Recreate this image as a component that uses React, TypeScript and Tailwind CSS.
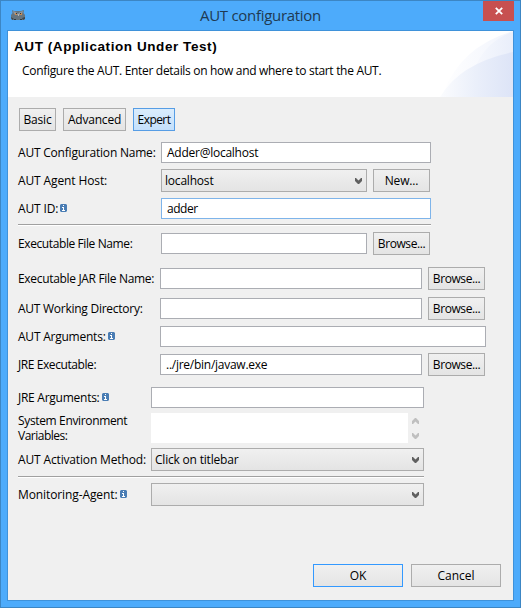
import type { ReactNode } from "react";
import { clsx } from "clsx";

function InfoIcon() {
  return (
    <svg className="mb-px ml-[2px] shrink-0" width="8" height="8" viewBox="0 0 8 8" shapeRendering="crispEdges">
      <rect width="7" height="8" fill="#4a7db4" />
      <path d="M0 0h1v1H0zM6 0h1v1H6zM0 7h1v1H0zM6 7h1v1H6z" fill="#9db7d3" />
      <path d="M3 1h1v1H3zM2 3h2v3h1v1H2V6h1V4H2z" fill="#fff" />
    </svg>
  );
}

function Chevron({ up = false, faint = false }: { up?: boolean; faint?: boolean }) {
  return (
    <svg className={clsx("shrink-0", up && "rotate-180")} width="7" height="6" viewBox="0 0 7 6">
      <path d="M0 0H1L3.5 2.4L6 0H7V3L4 6H3L0 3Z" fill={faint ? "#bfbfbf" : "#606060"} />
    </svg>
  );
}

function Label({ children, className, info = false }: { children: ReactNode; className?: string; info?: boolean }) {
  return (
    <div className={clsx("flex shrink-0 items-center whitespace-nowrap", className)}>
      <span>{children}</span>
      {info && <InfoIcon />}
    </div>
  );
}

function Field({ children, className }: { children?: ReactNode; className?: string }) {
  return (
    <div className={clsx("flex h-[21px] shrink-0 items-center border bg-white pl-[5px] whitespace-nowrap", className)}>
      {children}
    </div>
  );
}

function Select({ children, className }: { children?: ReactNode; className?: string }) {
  return (
    <div
      className={clsx(
        "flex h-[23px] shrink-0 items-center justify-between border border-[#acacac] bg-linear-to-b from-[#f0f0f0] to-[#e4e4e4] pr-1 pl-[3px] whitespace-nowrap",
        className,
      )}
    >
      <span>{children}</span>
      <Chevron />
    </div>
  );
}

function Button({ children, className }: { children: ReactNode; className?: string }) {
  return (
    <button
      className={clsx(
        "flex h-[23px] shrink-0 items-center justify-center border bg-linear-to-b whitespace-nowrap",
        className,
      )}
    >
      {children}
    </button>
  );
}

const plain = "border-[#acacac] from-[#f0f0f0] to-[#e4e4e4]";

function Browse() {
  return <Button className={clsx("ml-1.5 w-[57px] tracking-[-0.42px]", plain)}>Browse...</Button>;
}

function Row({ children, className }: { children: ReactNode; className?: string }) {
  return <div className={clsx("flex shrink-0 items-center", className)}>{children}</div>;
}

function Divider({ className }: { className?: string }) {
  return <div className={clsx("h-0.5 shrink-0 border-t border-b border-t-[#a0a0a0] border-b-white", className)} />;
}

function OwlIcon() {
  return (
    <svg width="14" height="11" viewBox="0 0 14 11">
      <path d="M1 0L3 1H10L13 0L12.5 3L14 5V9L12 10H3L0 9V5L1.5 3Z" fill="#66757f" />
      <path d="M2 1L5 2L7 4L9 2L12 1L11 4L8 5H5L3 4Z" fill="#8d98a0" />
      <path d="M0 7L3 9L1 10ZM11 8L14 7V9L12 10Z" fill="#3e474d" />
      <rect x="4" y="3" width="2" height="2" fill="#c68b55" />
      <rect x="9" y="3" width="2" height="2" fill="#c68b55" />
      <rect x="5" y="3" width="1" height="1" fill="#38322e" />
      <rect x="9" y="3" width="1" height="1" fill="#38322e" />
      <rect x="7" y="4" width="1" height="2" fill="#b9b3ac" />
      <path d="M3 9H5V10H3ZM9 9H11V10H9Z" fill="#303b43" />
    </svg>
  );
}

function BannerArt() {
  return (
    <svg className="shrink-0" width="73" height="66" viewBox="0 0 73 66">
      <defs>
        <linearGradient id="outer" x1="0" x2="1">
          <stop offset="0" stopColor="#ffffff" />
          <stop offset="1" stopColor="#f1f4fc" />
        </linearGradient>
        <linearGradient id="middle" x1="0" x2="1">
          <stop offset="0" stopColor="#f6f8fd" />
          <stop offset="1" stopColor="#e9eefa" />
        </linearGradient>
        <linearGradient id="inner" x1="0" x2="1">
          <stop offset="0" stopColor="#fbfcfe" />
          <stop offset="0.5" stopColor="#eaeffa" />
          <stop offset="1" stopColor="#dde4f7" />
        </linearGradient>
      </defs>
      <path d="M4 60Q22 15 73 0V66H0Z" fill="url(#outer)" />
      <path d="M36 34Q48 9 73 1V34Z" fill="url(#middle)" />
      <path d="M0 66Q20 32 73 21V66Z" fill="url(#inner)" />
    </svg>
  );
}

export default function App() {
  return (
    <div className="flex h-[608px] w-[521px] flex-col overflow-hidden border border-[#3c86c4] bg-[#4dabfb] px-1.5 pb-1.5 font-['Open_Sans','Noto_Sans',sans-serif] text-[12px] leading-[21px] text-black">
      <div className="flex h-[29px] shrink-0 items-start">
        <div className="mt-[9px] ml-1 w-[60px]">
          <OwlIcon />
        </div>
        <div className="mt-[4px] flex-1 pr-[3px] text-center text-[15px] tracking-[-0.3px] text-[#1f3a52]">
          AUT configuration
        </div>
        <div className="flex w-[61px] justify-end">
          <button className="flex h-5 w-[31px] items-center justify-center bg-[#c75050]">
            <svg width="8" height="8" viewBox="0 0 8 8">
              <path d="M0.8 0.8L7.2 7.2M7.2 0.8L0.8 7.2" stroke="#fff" strokeWidth="1.8" />
            </svg>
          </button>
        </div>
      </div>

      <div className="flex flex-1 flex-col border border-[#3f92da] bg-[#f0f0f0]">
        <div className="flex h-[66px] shrink-0 justify-between bg-white">
          <div className="pt-[6px] pl-1.5 whitespace-nowrap">
            <h1 className="font-['Liberation_Sans',sans-serif] text-[13.5px] leading-5 font-bold tracking-[0.57px]">
              AUT (Application Under Test)
            </h1>
            <p className="mt-[3px] pl-2 tracking-[-0.31px]">
              Configure the AUT. Enter details on how and where to start the AUT.
            </p>
          </div>
          <BannerArt />
        </div>

        <div className="flex flex-col pt-[11px] pl-2.5">
          <div className="ml-px flex gap-[7px]">
            <Button className={clsx("w-[37px] tracking-[-0.2px]", plain)}>Basic</Button>
            <Button className={clsx("w-[63px] tracking-[-0.2px]", plain)}>Advanced</Button>
            <Button className="w-[42px] border-[#569de5] from-[#daecfc] to-[#c4e0fc] tracking-[-0.55px]">Expert</Button>
          </div>

          <Row className="mt-[11px]">
            <Label className="w-[143px] tracking-[-0.21px]">AUT Configuration Name:</Label>
            <Field className="w-[270px] border-[#abadb3] tracking-[-0.25px]">Adder@localhost</Field>
          </Row>
          <Row className="mt-1.5">
            <Label className="w-[143px] tracking-[-0.12px]">AUT Agent Host:</Label>
            <Select className="w-[206px] tracking-[-0.2px]">localhost</Select>
            <Button className={clsx("ml-1.5 w-[57px] tracking-[-0.15px]", plain)}>New...</Button>
          </Row>
          <Row className="mt-1.5">
            <Label className="w-[143px] tracking-[-0.15px]" info>AUT ID:</Label>
            <Field className="w-[270px] border-[#7eb4ea] tracking-[-0.45px]">adder</Field>
          </Row>
          <Divider className="mt-[5px] w-[413px]" />
          <Row className="mt-1.5">
            <Label className="w-[143px] tracking-[-0.4px]">Executable File Name:</Label>
            <Field className="w-[206px] border-[#abadb3]" />
            <Browse />
          </Row>

          <Row className="mt-3">
            <Label className="w-[142px] tracking-[-0.32px]">Executable JAR File Name:</Label>
            <Field className="w-[262px] border-[#abadb3]" />
            <Browse />
          </Row>
          <Row className="mt-[7px]">
            <Label className="w-[142px] tracking-[-0.26px]">AUT Working Directory:</Label>
            <Field className="w-[262px] border-[#abadb3]" />
            <Browse />
          </Row>
          <Row className="mt-1.5">
            <Label className="w-[142px] tracking-[-0.23px]" info>AUT Arguments:</Label>
            <Field className="w-[326px] border-[#abadb3]" />
          </Row>
          <Row className="mt-1.5">
            <Label className="w-[142px] tracking-[-0.42px]">JRE Executable:</Label>
            <Field className="w-[262px] border-[#abadb3] tracking-[-0.26px]">../jre/bin/javaw.exe</Field>
            <Browse />
          </Row>

          <Row className="mt-[11px]">
            <Label className="w-[133px] tracking-[-0.26px]" info>JRE Arguments:</Label>
            <Field className="w-[273px] border-[#abadb3]" />
          </Row>
          <Row className="mt-[5px]">
            <div className="w-[133px] leading-[15px]">
              <div className="tracking-[-0.35px]">System Environment</div>
              <div className="tracking-[-0.5px]">Variables:</div>
            </div>
            <div className="h-[30px] w-[257px] bg-white" />
            <div className="ml-1 flex h-[30px] flex-col justify-between pt-[5px] pb-1">
              <Chevron up faint />
              <Chevron faint />
            </div>
          </Row>
          <Row className="mt-[5px]">
            <Label className="w-[133px] tracking-[-0.15px]">AUT Activation Method:</Label>
            <Select className="w-[273px] tracking-[-0.2px]">Click on titlebar</Select>
          </Row>
          <Divider className="mt-[5px] w-[406px]" />
          <Row className="mt-[5px]">
            <Label className="w-[133px] tracking-[-0.1px]" info>Monitoring-Agent:</Label>
            <Select className="w-[273px]" />
          </Row>
        </div>

        <div className="mt-auto mr-3 mb-[13px] flex justify-end gap-2">
          <Button className="w-[90px] border-[#3399ff] from-[#f0f0f0] to-[#e4e4e4]">OK</Button>
          <Button className={clsx("w-[90px]", plain)}>Cancel</Button>
        </div>
      </div>
    </div>
  );
}
